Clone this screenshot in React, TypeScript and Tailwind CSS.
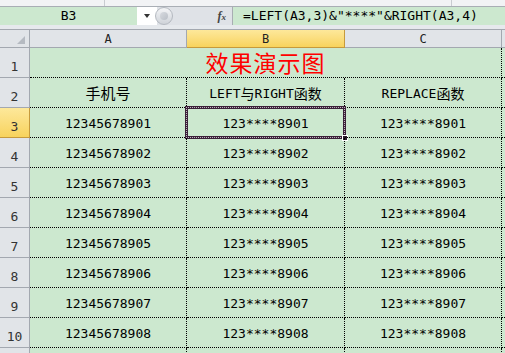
import React from "react";

const MONO = { fontFamily: '"DejaVu Sans Mono", "Noto Sans CJK SC", monospace' };
const CJK = { fontFamily: '"Noto Sans CJK SC", sans-serif' };

const rows = [
  ["12345678901", "123****8901", "123****8901"],
  ["12345678902", "123****8902", "123****8902"],
  ["12345678903", "123****8903", "123****8903"],
  ["12345678904", "123****8904", "123****8904"],
  ["12345678905", "123****8905", "123****8905"],
  ["12345678906", "123****8906", "123****8906"],
  ["12345678907", "123****8907", "123****8907"],
  ["12345678908", "123****8908", "123****8908"],
];

function RowHeader({ n, selected }: { n?: number; selected?: boolean }) {
  return (
    <div
      className={
        "w-[30px] shrink-0 flex items-end justify-center pb-[1px] border-r border-b text-[13px] text-[#333] " +
        (selected
          ? "bg-gradient-to-b from-[#fde89a] to-[#f8d35c] border-[#c69a3c]"
          : "bg-[#e1e4e8] border-[#a3a8b0]")
      }
      style={MONO}
    >
      {n}
    </div>
  );
}

function Cell({ children, w, selected }: { children?: React.ReactNode; w: string; selected?: boolean }) {
  return (
    <div
      className={
        w +
        " shrink-0 relative flex items-center justify-center pt-[2px] border-r border-b border-dotted border-black text-[13px] text-black"
      }
      style={MONO}
    >
      {children}
      {selected && (
        <>
          <div className="absolute left-[-2px] top-[-2px] right-[-2px] bottom-[-2px] border-[3px] border-[#3a1f38]" />
          <div className="absolute left-[-1px] top-[-1px] right-[-1px] bottom-[-1px] border border-dotted border-white opacity-70" />
          <div className="absolute right-[-4px] bottom-[-4px] w-[6px] h-[6px] bg-[#2a1a2a] border border-white" />
        </>
      )}
    </div>
  );
}

export default function App() {
  return (
    <div className="w-[505px] h-[353px] overflow-hidden bg-[#cce8cf] flex flex-col select-none">
      {/* top strip */}
      <div className="h-[7px] shrink-0 bg-[#f2f3f5] border-b border-[#a9aeb5] flex">
        <div className="w-[105px] border-r border-[#c9ccd1]" />
        <div className="w-[347px] border-r border-[#c9ccd1]" />
      </div>
      {/* formula bar */}
      <div className="h-[18px] shrink-0 flex">
        <div className="w-[137px] bg-[#cce8cf] flex items-center justify-center text-[13px] text-black" style={MONO}>
          B3
        </div>
        <div className="w-[20px] bg-white flex items-center justify-center">
          <div className="w-0 h-0 border-l-[3px] border-r-[3px] border-t-[4px] border-l-transparent border-r-transparent border-t-[#333]" />
        </div>
        <div className="w-[76px] bg-[#dfe2e7] relative flex items-center justify-end pr-[6px] border-r border-[#a8adb3]">
          <div className="absolute left-[-2px] top-[0px] w-[18px] h-[18px] rounded-full bg-gradient-to-b from-[#f4f5f7] to-[#cfd3d9] border border-[#b4b9c0]" />
          <div className="absolute left-[3px] top-[5px] w-[8px] h-[8px] rounded-full bg-gradient-to-br from-[#d8dbe0] to-[#b9bec6]" />
          <span
            className="italic font-bold text-[12px] text-[#444]"
            style={{ fontFamily: '"Liberation Serif", serif' }}
          >
            f<span className="text-[9px]">x</span>
          </span>
        </div>
        <div className="flex-1 bg-[#cce8cf] flex items-center pl-[10px] text-[13px] text-black whitespace-nowrap" style={MONO}>
          =LEFT(A3,3)&amp;"****"&amp;RIGHT(A3,4)
        </div>
      </div>
      {/* gap */}
      <div className="h-[4px] shrink-0 bg-[#e6e9ed]" />
      {/* column header */}
      <div className="h-[19px] shrink-0 flex border-t border-[#a3a8b0] text-[12px] text-[#222]" style={MONO}>
        <div className="w-[30px] shrink-0 bg-[#e1e4e8] border-r border-b border-[#a3a8b0] relative">
          <div className="absolute right-[4px] bottom-[3px] w-0 h-0"
            style={{ borderRight: "8px solid #b5bac1", borderTop: "8px solid transparent" }} />
        </div>
        <div className="w-[157px] shrink-0 bg-[#e1e4e8] border-r border-b border-[#a3a8b0] flex items-center justify-center">A</div>
        <div className="w-[158px] shrink-0 bg-gradient-to-b from-[#fde89a] to-[#f8d35c] border-r border-b border-[#c69a3c] flex items-center justify-center">B</div>
        <div className="w-[157px] shrink-0 bg-[#e1e4e8] border-r border-b border-[#a3a8b0] flex items-center justify-center">C</div>
        <div className="flex-1 bg-[#e1e4e8] border-b border-[#a3a8b0]" />
      </div>
      {/* row 1 */}
      <div className="h-[30px] shrink-0 flex">
        <RowHeader n={1} />
        <div
          className="w-[472px] shrink-0 flex items-center justify-center border-r border-b border-dotted border-black text-[23px] text-[#ff0000] tracking-[1px]"
          style={CJK}
        >
          效果演示图
        </div>
        <div className="flex-1 border-b border-dotted border-black" />
      </div>
      {/* row 2 */}
      <div className="h-[30px] shrink-0 flex">
        <RowHeader n={2} />
        <Cell w="w-[157px]">
          <span className="text-[15px]" style={CJK}>手机号</span>
        </Cell>
        <Cell w="w-[158px]">
          LEFT<span className="text-[14px]" style={CJK}>与</span>RIGHT<span className="text-[14px]" style={CJK}>函数</span>
        </Cell>
        <Cell w="w-[157px]">
          REPLACE<span className="text-[14px]" style={CJK}>函数</span>
        </Cell>
        <div className="flex-1 border-b border-dotted border-black" />
      </div>
      {rows.map((r, i) => (
        <div key={i} className="h-[30px] shrink-0 flex">
          <RowHeader n={i + 3} selected={i === 0} />
          <Cell w="w-[157px]">{r[0]}</Cell>
          <Cell w="w-[158px]" selected={i === 0}>{r[1]}</Cell>
          <Cell w="w-[157px]">{r[2]}</Cell>
          <div className="flex-1 border-b border-dotted border-black" />
        </div>
      ))}
      <div className="h-[30px] shrink-0 flex">
        <RowHeader />
        <Cell w="w-[157px]" />
        <Cell w="w-[158px]" />
        <Cell w="w-[157px]" />
      </div>
    </div>
  );
}
